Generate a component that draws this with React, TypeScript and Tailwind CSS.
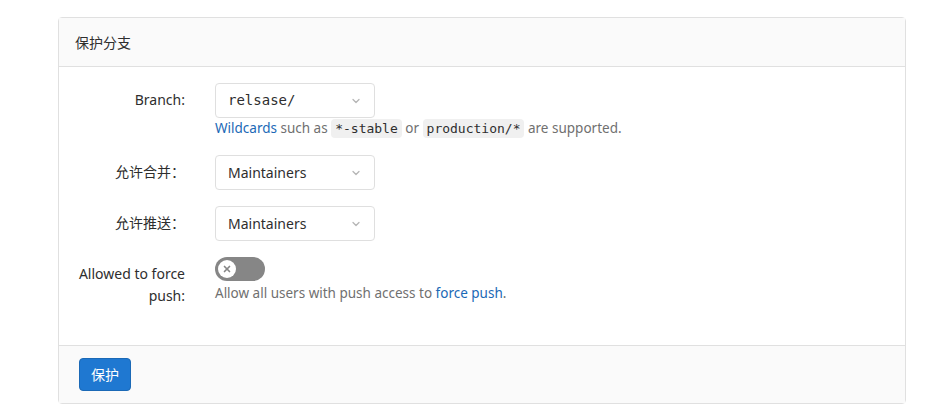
import { ChevronDown, X } from 'lucide-react';

const font = "font-['Noto_Sans','Noto_Sans_CJK_SC',sans-serif]";
const mono = "font-['DejaVu_Sans_Mono','Liberation_Mono',monospace]";

function Select({ value, monospace }: { value: string; monospace?: boolean }) {
  return (
    <div className="flex h-[35px] w-[160px] items-center justify-between rounded border border-[#dfdfdf] bg-white pl-3 pr-3">
      <span className={monospace ? `${mono} text-[14px] text-[#2e2e2e]` : 'text-[14px] text-[#2e2e2e]'}>
        {value}
      </span>
      <ChevronDown className="h-3 w-3 text-[#b5b5b5]" strokeWidth={2.5} />
    </div>
  );
}

function Code({ children }: { children: string }) {
  return (
    <code className={`${mono} rounded bg-[#f0f0f0] px-1 py-0.5 text-[13px] text-[#2e2e2e]`}>{children}</code>
  );
}

function Row({ label, children }: { label: React.ReactNode; children: React.ReactNode }) {
  return (
    <div className="flex">
      <div className="w-[156px] shrink-0 pr-[30px] pl-[6px] text-right text-[14px] leading-[22px] text-[#2e2e2e]">
        {label}
      </div>
      <div className="flex-1">{children}</div>
    </div>
  );
}

export default function App() {
  return (
    <div className={`${font} bg-white pt-[17px] pl-[58px] pr-[23px] h-[411px]`}>
      <div className="rounded border border-[#e0e0e0]">
        <div className="flex h-[49px] items-center border-b border-[#e0e0e0] bg-[#fafafa] px-4 text-[14px] text-[#2e2e2e]">
          保护分支
        </div>
        <div className="flex flex-col gap-[16px] pt-[16px] pb-[38px]">
          <Row label={<div className="pt-[6px]">Branch:</div>}>
            <Select value="relsase/" monospace />
            <div className="text-[13.5px] leading-[21px] text-[#707070]">
              <span className="text-[#1b69b6]">Wildcards</span> such as <Code>*-stable</Code> or{' '}
              <Code>production/*</Code> are supported.
            </div>
          </Row>
          <Row label={<div className="pt-[6px]">允许合并：</div>}>
            <Select value="Maintainers" />
          </Row>
          <Row label={<div className="pt-[6px]">允许推送：</div>}>
            <Select value="Maintainers" />
          </Row>
          <Row label={<div className="pt-[6px]">Allowed to force push:</div>}>
            <div className="flex h-[24px] w-[50px] items-center rounded-full bg-[#868686] px-[3px]">
              <div className="flex h-[18px] w-[18px] items-center justify-center rounded-full bg-white">
                <X className="h-[10px] w-[10px] text-[#868686]" strokeWidth={4} />
              </div>
            </div>
            <div className="mt-[2px] text-[13.5px] leading-[20px] text-[#707070]">
              Allow all users with push access to <span className="text-[#1b69b6]">force push</span>.
            </div>
          </Row>
        </div>
        <div className="border-t border-[#e0e0e0] bg-[#fafafa] px-5 py-3">
          <button className="h-[33px] rounded border border-[#1b69b6] bg-[#1f78d1] px-[11px] text-[14px] text-white">
            保护
          </button>
        </div>
      </div>
    </div>
  );
}
